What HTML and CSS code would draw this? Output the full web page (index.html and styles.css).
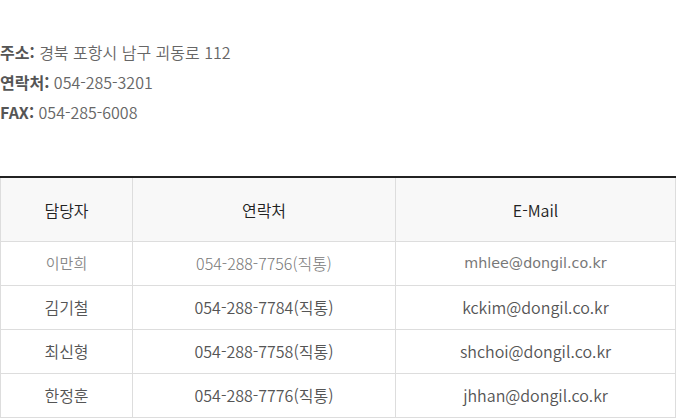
FILE: index.html
```html
<!DOCTYPE html>
<html lang="ko">
<head>
<meta charset="utf-8">
<link rel="stylesheet" href="styles.css">
</head>
<body>
<div class="info">
  <p class="line"><strong>주소:</strong> 경북 포항시 남구 괴동로 112</p>
  <p class="line"><strong>연락처:</strong> 054-285-3201</p>
  <p class="line"><strong>FAX:</strong> 054-285-6008</p>
</div>
<table class="contacts">
  <thead>
    <tr><th class="c1">담당자</th><th class="c2">연락처</th><th class="c3">E-Mail</th></tr>
  </thead>
  <tbody>
    <tr class="first"><td class="name">이만희</td><td class="phone">054-288-7756(직통)</td><td class="mail">mhlee@dongil.co.kr</td></tr>
    <tr><td>김기철</td><td>054-288-7784(직통)</td><td>kckim@dongil.co.kr</td></tr>
    <tr><td>최신형</td><td>054-288-7758(직통)</td><td>shchoi@dongil.co.kr</td></tr>
    <tr><td>한정훈</td><td>054-288-7776(직통)</td><td>jhhan@dongil.co.kr</td></tr>
  </tbody>
</table>
</body>
</html>
```
FILE: styles.css
```css
html, body {
  margin: 0;
  padding: 0;
  background: #fff;
}
body {
  font-family: "Noto Sans CJK KR", "Noto Sans", sans-serif;
  color: #666;
}
.info {
  padding-top: 37px;
  padding-bottom: 49px;
}
.line {
  margin: 0;
  font-size: 16px;
  line-height: 30px;
  color: #666;
  font-weight: 350;
}
.line strong {
  color: #555;
  font-weight: 700;
}
.contacts {
  border-collapse: collapse;
  width: 676px;
  table-layout: fixed;
  border-top: 2px solid #222;
}
.contacts th, .contacts td {
  border: 1px solid #ddd;
  text-align: center;
  vertical-align: middle;
  padding: 0;
  font-size: 16px;
  line-height: 22px;
}
.contacts thead th {
  border-top: 2px solid #222;
  background: #f8f8f8;
  font-weight: 350;
  color: #222;
  height: 63px;
  font-size: 16px;
}
.contacts td {
  height: 44px;
  color: #555;
  font-weight: 350;
  padding-bottom: 2px;
  box-sizing: border-box;
}
.c1 { width: 131px; }
.c2 { width: 262px; }
.first td.name {
  color: #888;
  font-size: 15px;
}
.first td.phone {
  color: #777;
  font-size: 16px;
  font-weight: 300;
}
.first td.mail {
  font-family: "DejaVu Sans", sans-serif;
  font-size: 14.3px;
  font-weight: 400;
  color: #777;
}
```
